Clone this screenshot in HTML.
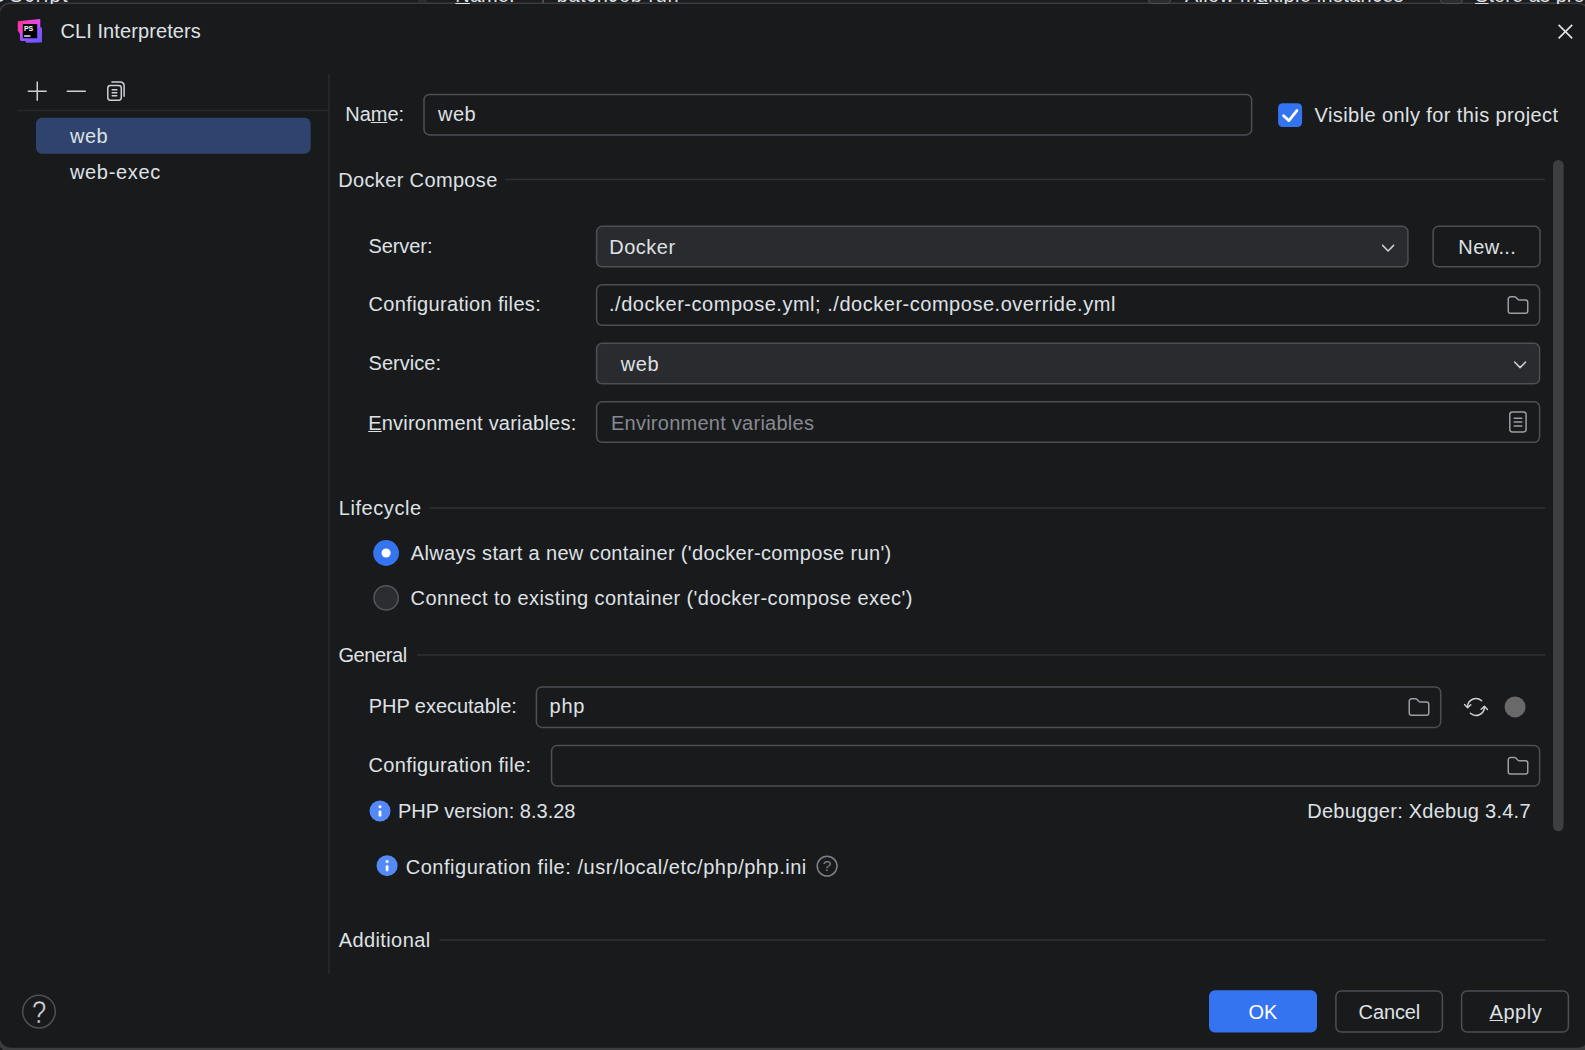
<!DOCTYPE html>
<html lang="en">
<head>
<meta charset="utf-8">
<title>CLI Interpreters</title>
<style>
*{box-sizing:border-box;margin:0;padding:0}
html,body{width:1585px;height:1050px;overflow:hidden;background:#191a1c}
body{position:relative;font-family:"Liberation Sans",Arial,sans-serif;font-size:20px;color:#dfe1e5}
.abs{position:absolute}
.t{position:absolute;white-space:nowrap;line-height:24px;height:24px}
.bk{position:absolute;white-space:nowrap;line-height:24px;height:24px;color:#dfe1e5;top:-16.6px}
u{text-decoration:underline;text-underline-offset:0.5px;text-decoration-thickness:1px}
.bk u{text-underline-offset:0.5px}
#art{position:absolute;left:0;top:0;width:1585px;height:1050px}
.f{fill:#191a1c;stroke:#4d4f54;stroke-width:1.5}
.c{fill:#2a2b2e;stroke:#4d4f54;stroke-width:1.5}
.l{stroke:#303236;stroke-width:1.5;fill:none}
.i{stroke:#ced0d6;stroke-width:1.5;fill:none;stroke-linecap:round;stroke-linejoin:round}
.g{stroke:#9a9da4;stroke-width:1.5;fill:none;stroke-linecap:round;stroke-linejoin:round}
</style>
</head>
<body>
<svg id="art" width="1585" height="1050" viewBox="0 0 1585 1050">
<defs>
<linearGradient id="lg1" x1="0" y1="0" x2="1" y2="0.4"><stop offset="0" stop-color="#ff2d8e"/><stop offset="0.45" stop-color="#f53fc4"/><stop offset="1" stop-color="#d04dff"/></linearGradient>
<linearGradient id="lg2" x1="0" y1="0.2" x2="0.8" y2="1"><stop offset="0" stop-color="#d24dff"/><stop offset="0.55" stop-color="#8a55ff"/><stop offset="1" stop-color="#6b57ff"/></linearGradient>
</defs>
<!-- dialog frame -->
<rect x="0" y="0" width="1585" height="8" fill="#1b1c1e"/>
<rect x="0" y="1040" width="1585" height="10" fill="#141516"/>
<rect x="-1.7" y="2.6" width="1591.9" height="1050" rx="12" fill="#3b3c3e"/>
<rect x="-0.2" y="4.1" width="1588.9" height="1043.6" rx="10.5" fill="#191a1c"/>

<!-- logo -->
<path d="M17.8 21.2 L39.6 19 Q40.3 19 40.3 19.8 L40.3 27 L39.2 33 L20.2 34.6 L17.8 30.6 Z" fill="url(#lg1)"/>
<path d="M20 33.5 L39 26.8 L41.2 27.6 Q42 28 42 28.8 L42 41.6 Q42 42.6 41 42.6 L27 42.8 Q26.3 42.8 25.9 42.2 L25.2 41 L21.2 40.9 Q20.6 40.9 20.3 40.3 L20 39.7 Z" fill="url(#lg2)"/>
<rect x="22.8" y="23.9" width="14.4" height="14.3" rx="0.6" fill="#000"/>
<rect x="24.1" y="35.2" width="6.3" height="1.6" fill="#d8d8d8"/>
<text x="24" y="30.9" font-family="Liberation Sans, Arial, sans-serif" font-weight="bold" font-size="8" fill="#fff" textLength="9.2" lengthAdjust="spacingAndGlyphs">PS</text>

<!-- close -->
<path d="M1558.6 24.9 L1572.2 38.3 M1572.2 24.9 L1558.6 38.3" stroke="#dfe1e5" stroke-width="1.7" fill="none"/>

<!-- toolbar -->
<path class="i" d="M28.3 91.2 H46.2 M37.25 82.1 V100.2"/>
<path class="i" d="M67.3 91.2 H85.3"/>
<rect class="i" x="107.8" y="85.5" width="13.5" height="14.7" rx="2.6"/>
<path class="i" d="M111.9 82.1 H120.6 A3.5 3.5 0 0 1 124.1 85.6 V96.2"/>
<path class="i" d="M112.2 89.8 H116.8 M112.2 92.8 H116.8 M112.2 95.7 H116.8" stroke-width="1.3"/>
<path d="M18 110.5 H329" stroke="#27292c" stroke-width="1.5"/>
<path d="M329 74 V973.8" stroke="#292b2e" stroke-width="1.5"/>
<rect x="36" y="117.7" width="274.7" height="36" rx="6" fill="#2e436e"/>

<!-- name row -->
<rect class="f" x="424" y="94.4" width="827.6" height="40.5" rx="5.5"/>
<rect x="1278.1" y="103.2" width="24" height="23.8" rx="4.5" fill="#3574f0"/>
<path d="M1283.6 115.8 L1288.9 120.6 L1296.9 110.6" stroke="#fff" stroke-width="2.8" fill="none" stroke-linecap="round" stroke-linejoin="round"/>

<!-- scrollbar -->
<rect x="1553" y="160" width="10.6" height="671.3" rx="5.3" fill="#3e3f42"/>

<!-- section lines -->
<path class="l" d="M505.2 179.4 H1545.2"/>
<path class="l" d="M429.4 507.9 H1545.2"/>
<path class="l" d="M417.2 655 H1545.2"/>
<path class="l" d="M439.5 940 H1545.2"/>

<!-- Docker Compose -->
<rect class="c" x="596.6" y="226.3" width="811.3" height="40.5" rx="5.5"/>
<path class="i" d="M1382.6 245.4 L1388.1 251 L1393.6 245.4" stroke-linecap="butt"/>
<rect class="f" x="1433.1" y="226.3" width="106.9" height="40.5" rx="5.5"/>
<rect class="f" x="596.6" y="284.8" width="943" height="40.5" rx="5.5"/>
<g transform="translate(1506,293) scale(1.5)"><path class="g" style="stroke-width:1" d="M1.5 4 A1.5 1.5 0 0 1 3 2.5 H5.8 A1 1 0 0 1 6.5 2.8 L8 4.3 A1 1 0 0 0 8.7 4.6 H13 A1.5 1.5 0 0 1 14.5 6.1 V12 A1.5 1.5 0 0 1 13 13.5 H3 A1.5 1.5 0 0 1 1.5 12 Z"/></g>
<rect class="c" x="596.6" y="343.3" width="943" height="40.5" rx="5.5"/>
<path class="i" d="M1514.6 362 L1520.1 367.6 L1525.6 362" stroke-linecap="butt"/>
<rect class="f" x="596.6" y="401.8" width="943" height="40.5" rx="5.5"/>
<rect class="g" x="1509.8" y="411.9" width="16.3" height="20" rx="2.6"/>
<path class="g" d="M1514.2 418.2 H1521.8 M1514.2 422 H1521.8 M1514.2 425.9 H1521.8" stroke-width="1.3"/>

<!-- Lifecycle -->
<circle cx="386.1" cy="553" r="12.9" fill="#3574f0"/>
<circle cx="386.1" cy="553" r="4.6" fill="#fff"/>
<circle cx="386.1" cy="597.9" r="12.1" fill="#2b2d30" stroke="#55575c" stroke-width="1.5"/>

<!-- General -->
<rect class="f" x="536.4" y="686.9" width="904.3" height="40.5" rx="5.5"/>
<g transform="translate(1407,695) scale(1.5)"><path class="g" style="stroke-width:1" d="M1.5 4 A1.5 1.5 0 0 1 3 2.5 H5.8 A1 1 0 0 1 6.5 2.8 L8 4.3 A1 1 0 0 0 8.7 4.6 H13 A1.5 1.5 0 0 1 14.5 6.1 V12 A1.5 1.5 0 0 1 13 13.5 H3 A1.5 1.5 0 0 1 1.5 12 Z"/></g>
<g class="i">
<path d="M1467.6 707 A8.4 8.4 0 0 1 1481.6 700.7"/>
<path d="M1464.6 704.6 L1467.6 707.8 L1470.8 704.8"/>
<path d="M1484.4 707 A8.4 8.4 0 0 1 1470.4 713.3"/>
<path d="M1481.2 709.2 L1484.4 706.2 L1487.4 709.4"/>
</g>
<circle cx="1515.05" cy="706.9" r="10.5" fill="#696969"/>
<rect class="f" x="551.6" y="745.6" width="988" height="40.5" rx="5.5"/>
<g transform="translate(1506,753.8) scale(1.5)"><path class="g" style="stroke-width:1" d="M1.5 4 A1.5 1.5 0 0 1 3 2.5 H5.8 A1 1 0 0 1 6.5 2.8 L8 4.3 A1 1 0 0 0 8.7 4.6 H13 A1.5 1.5 0 0 1 14.5 6.1 V12 A1.5 1.5 0 0 1 13 13.5 H3 A1.5 1.5 0 0 1 1.5 12 Z"/></g>

<!-- info icons -->
<circle cx="380" cy="811" r="10.5" fill="#548af7"/>
<circle cx="380" cy="806.7" r="1.5" fill="#fff"/>
<path d="M380 811.9 V815.3" stroke="#fff" stroke-width="2.8" stroke-linecap="round"/>
<circle cx="387.1" cy="865.7" r="10.5" fill="#548af7"/>
<circle cx="387.1" cy="861.4" r="1.5" fill="#fff"/>
<path d="M387.1 866.6 V870.0" stroke="#fff" stroke-width="2.8" stroke-linecap="round"/>
<circle cx="827.1" cy="866.1" r="9.9" fill="none" stroke="#7e8188" stroke-width="1.5"/>
<text x="827.1" y="871.3" text-anchor="middle" font-family="Liberation Sans, Arial, sans-serif" font-size="15.5" fill="#7e8188">?</text>

<!-- bottom -->
<circle cx="39" cy="1011.6" r="16.3" fill="none" stroke="#4e5055" stroke-width="1.5"/>
<text transform="translate(39.1,1023.2) scale(0.8,1)" x="0" y="0" text-anchor="middle" font-family="Liberation Sans, Arial, sans-serif" font-size="32" fill="#d8dade" stroke="#191a1c" stroke-width="0.5">?</text>
<rect x="1209" y="990.2" width="108" height="42.3" rx="6" fill="#3574f0"/>
<rect class="f" x="1335.9" y="990.9" width="106.5" height="41.2" rx="5.5"/>
<rect class="f" x="1461.6" y="990.9" width="106.8" height="41.2" rx="5.5"/>
</svg>

<div id="title" class="t" style="left:60.43px;top:19px;letter-spacing:0.093px;">CLI Interpreters</div>
<div id="li1" class="t" style="left:69.93px;top:124px;letter-spacing:0.511px;">web</div>
<div id="li2" class="t" style="left:69.93px;top:160px;letter-spacing:0.686px;">web-exec</div>
<div id="lname" class="t" style="left:345.29px;top:102px;letter-spacing:-0.045px;">Na<u>m</u>e:</div>
<div id="vname" class="t" style="left:438.03px;top:102px;letter-spacing:0.436px;">web</div>
<div id="lvis" class="t" style="left:1314.61px;top:103px;letter-spacing:0.408px;">Visible only for this project</div>
<div id="s1" class="t" style="left:338.26px;top:168px;letter-spacing:0.351px;">Docker Compose</div>
<div id="l1" class="t" style="left:368.39px;top:234px;letter-spacing:-0.055px;">Server:</div>
<div id="v1" class="t" style="left:609.31px;top:235px;letter-spacing:0.485px;">Docker</div>
<div id="bnew" class="t" style="left:1458.36px;top:235px;letter-spacing:0.377px;">New...</div>
<div id="l2" class="t" style="left:368.58px;top:292px;letter-spacing:0.344px;">Configuration files:</div>
<div id="v2" class="t" style="left:609.02px;top:292px;letter-spacing:0.523px;">./docker-compose.yml; ./docker-compose.override.yml</div>
<div id="l3" class="t" style="left:368.59px;top:351px;letter-spacing:0.033px;">Service:</div>
<div id="v3" class="t" style="left:620.73px;top:352px;letter-spacing:0.631px;">web</div>
<div id="l4" class="t" style="left:368.20px;top:411px;letter-spacing:0.218px;"><u>E</u>nvironment variables:</div>
<div id="v4" class="t" style="left:610.94px;top:411px;letter-spacing:0.256px;color:#868a91">Environment variables</div>
<div id="s2" class="t" style="left:338.69px;top:496px;letter-spacing:0.578px;">Lifecycle</div>
<div id="r1" class="t" style="left:410.76px;top:541px;letter-spacing:0.342px;">Always start a new container ('docker-compose run')</div>
<div id="r2" class="t" style="left:410.55px;top:586px;letter-spacing:0.417px;">Connect to existing container ('docker-compose exec')</div>
<div id="s3" class="t" style="left:338.39px;top:643px;letter-spacing:-0.375px;">General</div>
<div id="l5" class="t" style="left:368.69px;top:694px;letter-spacing:-0.033px;">PHP executable:</div>
<div id="v5" class="t" style="left:549.45px;top:694px;letter-spacing:0.820px;">php</div>
<div id="l6" class="t" style="left:368.38px;top:753px;letter-spacing:0.393px;">Configuration file:</div>
<div id="i1" class="t" style="left:397.96px;top:799px;letter-spacing:-0.001px;">PHP version: 8.3.28</div>
<div id="i2" class="t" style="left:1307.26px;top:799px;letter-spacing:0.255px;">Debugger: Xdebug 3.4.7</div>
<div id="i3" class="t" style="left:405.68px;top:855px;letter-spacing:0.528px;">Configuration file: /usr/local/etc/php/php.ini</div>
<div id="s4" class="t" style="left:338.66px;top:928px;letter-spacing:0.404px;">Additional</div>
<div id="bok" class="t" style="left:1248.60px;top:1000px;letter-spacing:-0.175px;color:#fff">OK</div>
<div id="bcancel" class="t" style="left:1358.58px;top:1000px;letter-spacing:-0.112px;">Cancel</div>
<div id="bapply" class="t" style="left:1489.56px;top:1000px;letter-spacing:0.512px;"><u>A</u>pply</div>
<!-- background application peeking above the dialog -->
<div class="abs" style="left:0;top:0;width:1585px;height:4px;overflow:hidden">
<div class="abs" style="left:-9px;top:-13px;width:15px;height:15px;border-radius:50%;border:2px solid #dfe1e5"></div>
<div class="abs" style="left:418px;top:0;width:9px;height:3.4px;background:#2b2d30"></div>
<div class="abs" style="left:542px;top:0;width:1.5px;height:3.4px;background:#4b4d52"></div>
<div class="abs" style="left:1147.5px;top:-20px;width:23px;height:23.6px;background:#2b2d30;border:1.5px solid #4d4f54;border-radius:4px"></div>
<div class="abs" style="left:1439.5px;top:-20px;width:23px;height:23.6px;background:#2b2d30;border:1.5px solid #4d4f54;border-radius:4px"></div>
<div class="bk" style="left:9.59px;letter-spacing:1.386px">Script</div>
<div class="bk" style="left:455.36px;letter-spacing:0.090px"><u>N</u>ame:</div>
<div class="bk" style="left:556.71px;letter-spacing:0.568px">batchJob run</div>
<div class="bk" style="left:1184.96px;letter-spacing:0.272px">Allow m<u>u</u>ltiple instances</div>
<div class="bk" style="left:1475.09px;letter-spacing:0.062px"><u>S</u>tore as project file</div>
</div>

</body>
</html>
